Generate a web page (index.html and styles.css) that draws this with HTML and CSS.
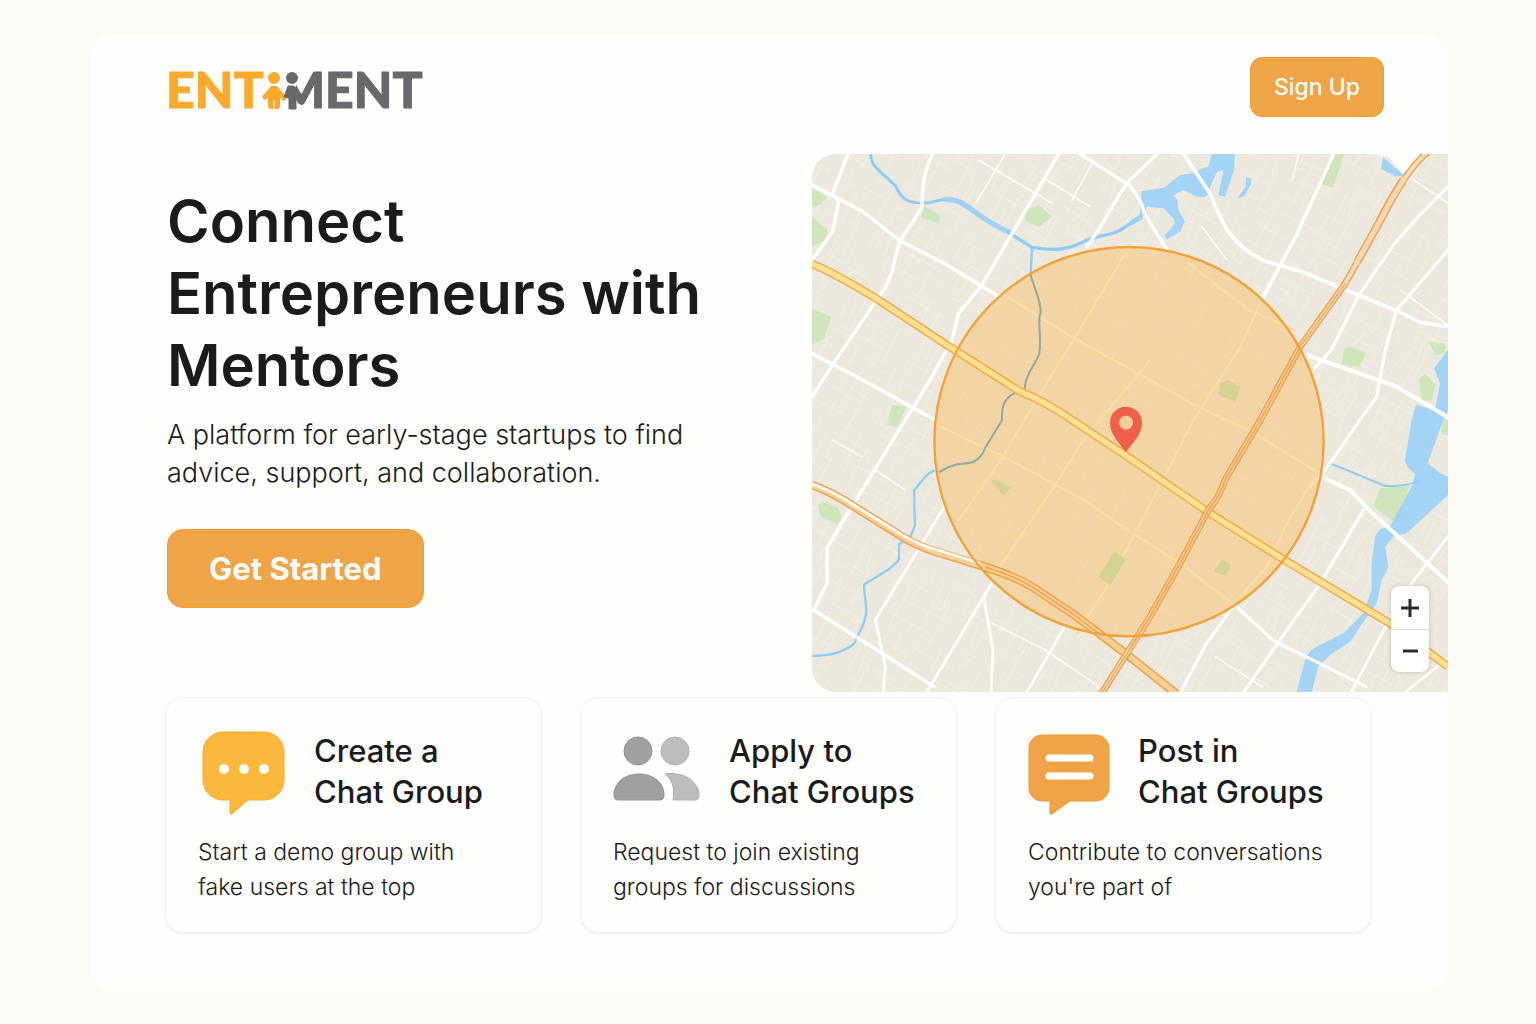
FILE: index.html
```html
<!DOCTYPE html>
<html lang="en">
<head>
<meta charset="utf-8">
<meta name="viewport" content="width=device-width, initial-scale=1">
<title>Entiment</title>
<link rel="stylesheet" href="styles.css">
</head>
<body>
<div class="panel">
  <header class="header">
    <a class="logo" href="#" aria-label="Entiment home">
      <svg width="270" height="64" viewBox="-4 -11 270 64">
        <defs>
          <clipPath id="m-side"><path d="M131 16l8-18h30v46h-40V16z"/></clipPath>
        </defs>
        <g class="logo-text">
          <text class="logo-warm" x="-1" y="40">ENT</text>
          <text class="logo-cool" x="158" y="40" text-anchor="end" clip-path="url(#m-side)">M</text>
          <text class="logo-cool" x="158" y="40">ENT</text>
        </g>
        <g fill="#fba92c">
          <circle cx="107" cy="10" r="6"/>
          <path d="M104 18h6l3 4v16q0 3-3 3h-6q-3 0-3-3V22z"/>
          <path d="M105 21l-7 8M109 21l8 9" fill="none" stroke="#fba92c" stroke-width="5" stroke-linecap="round"/>
          <path d="M107 32v9" stroke="#fefefc"/>
        </g>
        <g fill="#69696b" stroke-linejoin="round">
          <circle cx="125" cy="10" r="7" stroke="#fefefc" stroke-width="2"/>
          <path d="M121 18h6l12 13-4 6-6-9v13h-7V30l-5-1z" stroke="#69696b" stroke-width="1"/>
        </g>
      </svg>
    </a>
    <button class="btn btn-small" type="button">Sign Up</button>
  </header>

  <main>
    <section class="hero">
      <div class="intro">
        <h1>Connect Entrepreneurs with Mentors</h1>
        <p>A platform for early-stage startups to find advice, support, and collaboration.</p>
        <button class="btn btn-large" type="button">Get Started</button>
      </div>

      <div class="map">
        <svg class="map-art" viewBox="0 12 1908 1614" role="img" aria-label="Map of mentors nearby">
          <defs>
            <pattern id="lanes" width="260" height="230" patternUnits="userSpaceOnUse" patternTransform="rotate(28)">
              <path d="M10 0v90M48 20v150M95 60v170M140 0v60M180 40v120M225 90v140M0 30h70M30 85h120M120 140h110M60 195h150M190 25h70M70 110l10 60M160 160l-6 50M205 60l8 50" fill="none" stroke="#fff" stroke-opacity=".25" stroke-width="3"/>
            </pattern>
            <pattern id="lanes-fine" width="190" height="170" patternUnits="userSpaceOnUse" patternTransform="rotate(33)">
              <path d="M20 10v70M34 30v90M78 0v50M110 60v90M122 40v60M160 90v60M5 130h60M70 95h60M100 25h70M140 70h40" fill="none" stroke="#fff" stroke-opacity=".25" stroke-width="2"/>
            </pattern>
          </defs>
          <rect y="12" width="1908" height="1614" fill="#ece8dd"/>
          <rect y="12" width="1908" height="1614" fill="url(#lanes)"/>
          <rect y="12" width="1908" height="1614" fill="url(#lanes-fine)"/>

          <g fill="#cfe5ba">
            <path d="M0 115l45 25-20 25-25 5zM0 200l50 42-15 30-35 20zM0 475l58 25-22 66-36 18zM335 168l50 28-4 25-52-18zM645 180l35-15 40 35-40 32-42-22zM240 765l45 5-30 60-30-5zM18 1065l15-12 45 20 12 30-15 20-52-25zM1565 12h33l-36 101-35-10zM1595 600l15-12 52 22-20 42-52-10zM1850 575l50 5v30l-30 5zM1820 690l20-18 30 30-10 50-30-2zM1704 1015l90-10-40 118-70-55zM1890 810h18v45l-20-3z"/>
          </g>

          <g fill="#a3d4f5">
            <path d="M989 124l25-4 45-8 45-37 50-7 10-10 25-8 10-38h70l-3 48-27 80-20-5 15-75-18 5-17 35-10 30-10 12-25-2-40-20-30 15 12 15 3 30 20 35-15 30-40 23-7-10 32-38-5-15-30-30-50-5-15 40-35 15v-12l30-20z"/>
            <path d="M1303 82l14 4v16l-20 36-22 8 25-35z"/>
            <path d="M1908 600L1866 655 1884 700 1869 780 1812 765 1799 810 1779 930Q1780 950 1809 970L1804 1000 1734 1130Q1700 1130 1689 1160L1679 1240V1320L1654 1390 1594 1450 1514 1490Q1490 1500 1479 1530L1454 1626H1499L1519 1550 1554 1515 1614 1475 1644 1430 1694 1360 1709 1290 1729 1250 1719 1190 1744 1160 1784 1150 1908 1035V980L1884 970 1847 940 1869 880 1894 810 1908 780z"/>
          </g>
          <g fill="none" stroke="#8dcdf6" stroke-linecap="round" stroke-linejoin="round">
            <path d="M176 12c0 40 30 50 74 95 20 45 40 52 90 52 30-2 50-15 75-11" stroke-width="9"/>
            <path d="M400 148c70 0 70 45 195 100" stroke="#a0d2f5" stroke-width="16"/>
            <path d="M590 248l70 44c60 10 110 10 160-20 50-20 90-16 120-42l35-20" stroke-width="10"/>
            <path d="M660 295l-4 80M366 962c-25 10-35 30-60 60l3 105-18 40-30 16v45c-20 30-60 45-104 75-4 50 20 70-8 130l-24 50c-30 20-50 32-125 35" stroke-width="7"/>
            <path d="M1555 940l165 68c40 2 70-4 100-14" stroke-width="6"/>
          </g>

          <g fill="none" stroke="#fff" stroke-linecap="round" stroke-linejoin="round">
            <g stroke-width="10">
              <path d="M0 105l150 78 115 90 130 66 165 100"/>
              <path d="M108 12L62 130l18 25-18 90-62 85M362 12c-30 60-30 100-32 160l-65 100c-20 50-15 90-45 140L68 635 0 740"/>
              <path d="M740 12L600 250l-90 155-70 85-20 80-60 110-80 130L110 1085l-65 110 0 105-40 80 190 120 170 110"/>
              <path d="M805 12l149 95c20 30 38 50 42 80l30 50 38 60M1035 12L954 90c-50 60-80 140-130 200"/>
              <path d="M1115 12l80 120c35 90 60 150 160 200l120 35 290 120 60 30 80 12" stroke-width="11"/>
              <path d="M0 610l170 90 200 110M1565 12l-110 240-100 188"/>
              <path d="M1908 110l-90 90-70 80-110 160-80 160-50 55M1908 300l-154 180-34 120-26 140-50 70-90 130-60 70" stroke-width="9"/>
              <path d="M1484 615l270 95 154 92M1535 984l80 36 66 70 100 90 127 116" stroke-width="12"/>
              <path d="M1655 1080l-130 220-100 140-130 186M1262 1360l120 110 280 140M1262 1372l-80 110-75 142" stroke-width="9"/>
              <path d="M400 1065L190 1410l30 140-6 76M515 1340l28 160-6 126M545 1290L345 1626M755 1435L645 1626M1908 1160l-140 180-150 286M1900 1530l-120 96" stroke-width="8"/>
            </g>
            <g stroke-width="5" stroke-opacity=".8">
              <path d="M580 12l-90 150M500 30l220 130M705 90l130 80M840 40l-60 110M1460 12l-20 80M190 960l90 60M60 870l90 50M540 1420l160 80 160 110M1170 230l75 100M1210 1520l140 90M1790 80l118 80M1765 420l143 105"/>
            </g>
          </g>
          <path d="M1690 12l40 10 45 52 18 6 48-68z" fill="#fefefc"/>
          <path d="M1713 22l62 54-20 4-48-22z" fill="#a3d4f5"/>

          <circle cx="951" cy="875" r="585" fill="#fbb857" fill-opacity=".42"/>
          <g fill="none" stroke="#fbdca3" stroke-width="7" stroke-linecap="round" stroke-linejoin="round">
            <path d="M580 435l105 68 100 60 170 95 190 105 170 80 205 125M940 310L790 560 680 740 560 940 440 1110M1345 460l-60 130-140 220-160 310-100 190-90 140"/>
            <path d="M385 830l190 90 240 130 139 95 150 95 150 115M1130 340l180 140 140 60M1515 970l-90 150-60 130-90 100M1010 635l-200 240-80 130-170 250"/>
          </g>
          <path d="M1225 700l22-10 38 22-14 42-52-20zM535 990l25 2 36 22-22 20zM905 1205l38 22-48 78-35-25zM1232 1228l26 20-20 30-34-14z" fill="#d5d394"/>
          <path d="M656 375c10 40 30 70 30 115-12 20 4 60-4 120-10 35-40 55-44 106-60 20-70 45-68 95l-50 82c-20 55-60 45-85 50-30 8-40 15-55 24" fill="none" stroke="#8daaa6" stroke-width="6"/>

          <g fill="none" stroke-linejoin="round">
            <path d="M0 342Q60 365 200 450L400 582 620 722Q700 755 780 810L954 925 1194 1090 1414 1228 1734 1420 1908 1550" stroke="#f3a83c" stroke-width="25"/>
            <path d="M0 342Q60 365 200 450L400 582 620 722Q700 755 780 810L954 925 1194 1090 1414 1228 1734 1420 1908 1550" stroke="#fbe093" stroke-width="17"/>
            <path d="M0 1005Q60 1025 150 1085L270 1160Q320 1190 370 1205L510 1248Q600 1275 660 1310L780 1390 940 1510 1094 1632" stroke="#f1a043" stroke-width="26"/>
            <path d="M0 1005Q60 1025 150 1085L270 1160Q320 1190 370 1205L510 1248Q600 1275 660 1310L780 1390 940 1510 1094 1632" stroke="#f9cf98" stroke-width="17"/>
            <path d="M0 1002Q60 1020 150 1080L270 1154Q320 1184 370 1198L505 1240" stroke="#fff" stroke-width="8"/>
            <path d="M520 1251Q600 1275 660 1310L780 1390 860 1450" stroke="#f1a043" stroke-width="4"/>
            <path d="M1850 4Q1780 60 1700 220L1600 400 1465 590 1345 810 1239 990Q1220 1045 1189 1080L1104 1240 1014 1400 868 1632" stroke="#ee9a49" stroke-width="20"/>
            <path d="M1850 4Q1780 60 1700 220L1600 400 1465 590 1345 810 1239 990Q1220 1045 1189 1080L1104 1240 1014 1400 868 1632" stroke="#fbddb8" stroke-width="12"/>
            <path d="M1465 590L1345 810 1239 990Q1220 1045 1189 1080L1104 1240 1014 1400 960 1490" stroke="#f6c98c" stroke-width="12"/>
            <path d="M1600 400L1465 590 1345 810 1239 990Q1220 1045 1189 1080L1104 1240 1014 1400 868 1632" stroke="#eea64f" stroke-width="4"/>
            <path d="M1770 96Q1735 150 1700 220L1640 328" stroke="#ee9a49" stroke-width="24" stroke-linecap="round"/>
            <path d="M1778 84Q1735 150 1700 220L1632 342" stroke="#fad9b0" stroke-width="16"/>
          </g>
          <circle cx="951" cy="875" r="584" fill="none" stroke="#f3a233" stroke-width="7"/>
          <path d="M942 908c-10-20-48-50-48-90a48 48 0 0 1 96 0c0 40-38 70-48 90z" fill="#f05f49"/>
          <circle cx="942" cy="818" r="21" fill="#f5d09b"/>
        </svg>
        <div class="zoom">
          <button type="button" aria-label="Zoom in"><svg width="20" height="20" viewBox="0 0 20 20"><path d="M10 1v18M1 10h18"/></svg></button>
          <button type="button" aria-label="Zoom out"><svg width="20" height="20" viewBox="0 0 20 20"><path d="M3 10h15"/></svg></button>
        </div>
      </div>
    </section>

    <section class="features">
      <article class="card">
        <div class="card-head">
          <svg width="88" height="86" viewBox="-2 -1 88 86">
            <path d="M22 1h42a20 20 0 0 1 20 20v28a20 20 0 0 1-20 20H48L32 83q-2 1-2-1V69h-8A20 20 0 0 1 3 49V21A20 20 0 0 1 22 1z" fill="#fab83d" stroke="#f9ae22"/>
            <g fill="#fff"><circle cx="24" cy="38" r="5"/><circle cx="44" cy="38" r="5"/><circle cx="64" cy="38" r="5"/></g>
          </svg>
          <h2>Create a<br>Chat Group</h2>
        </div>
        <p>Start a demo group with<br>fake users at the top</p>
      </article>

      <article class="card">
        <div class="card-head">
          <svg width="88" height="86" viewBox="0 -1 88 86">
            <g fill="#a0a0a0" stroke="#929292"><circle cx="25" cy="20" r="14"/><path d="M5 69c-3 0-4-2-4-5 0-12 10-21 25-21s25 9 25 21c0 3-1 5-4 5z"/></g>
            <g fill="#bdbdbd" stroke="#b0b0b0"><circle cx="62" cy="20" r="14"/><path d="M52 43c19-3 34 8 34 21 0 3-1 5-4 5H60c2-11 0-20-8-26z"/></g>
          </svg>
          <h2>Apply to<br>Chat Groups</h2>
        </div>
        <p>Request to join existing<br>groups for discussions</p>
      </article>

      <article class="card">
        <div class="card-head">
          <svg width="82" height="86" viewBox="0 -1 82 86">
            <path d="M14 4h54a13 13 0 0 1 13 13v40a13 13 0 0 1-13 13H42L24 83q-2 1-2-1V70h-8A13 13 0 0 1 1 57V17A13 13 0 0 1 14 4z" fill="#efa445" stroke="#ee9a31"/>
            <path d="M21 27h41M21 45h41" stroke="#fff" stroke-width="7" stroke-linecap="round"/>
          </svg>
          <h2>Post in<br>Chat Groups</h2>
        </div>
        <p>Contribute to conversations<br>you're part of</p>
      </article>
    </section>
  </main>
</div>
</body>
</html>
```
FILE: styles.css
```css
* { box-sizing: border-box; }

body {
  margin: 0;
  padding: 35px 88px 34px 91px;
  background: #fdfbf5;
  color: #1b1b1b;
  font-family: Inter, "Liberation Sans", sans-serif;
}

h1, h2, p { margin: 0; }
svg { display: block; }

.panel {
  padding-bottom: 57px;
  border-radius: 20px;
  background: #fefefc;
}

.header {
  display: flex;
  align-items: flex-start;
  justify-content: space-between;
  padding: 22px 64px 33px 72px;
}

.logo-text {
  font-family: Lato, "Liberation Sans", sans-serif;
  font-size: 50px;
  font-weight: 900;
  stroke-width: 1px;
  stroke-linejoin: round;
}
.logo-warm { fill: #fba92c; stroke: #fba92c; }
.logo-cool { fill: #69696b; stroke: #69696b; }

.btn {
  border: 1px solid #ed9c36;
  background: #efa445;
  color: #fff;
  font-family: inherit;
  cursor: pointer;
}
.btn-small {
  height: 60px;
  padding: 0 23px;
  border-radius: 12px;
  font-size: 23px;
  font-weight: 500;
}
.btn-large {
  height: 79px;
  margin-top: 37px;
  padding: 0 41px;
  border-radius: 16px;
  font-size: 31px;
  font-weight: 700;
}

.hero {
  display: grid;
  grid-template-columns: 721fr 636fr;
}
.intro { padding: 31px 72px 0 76px; }
.intro h1 {
  font-size: 58px;
  font-weight: 600;
  line-height: 72px;
}
.intro p {
  margin-top: 15px;
  font-size: 27px;
  font-weight: 350;
  line-height: 38px;
}

.map {
  position: relative;
  overflow: hidden;
  border-radius: 24px 0 0 24px;
}
.map-art { width: 100%; height: auto; }

.zoom {
  position: absolute;
  right: 19px;
  bottom: 20px;
  width: 38px;
  border-radius: 8px;
  background: #fff;
  box-shadow: 0 0 4px rgba(90, 80, 50, .3);
}
.zoom button {
  display: grid;
  place-items: center;
  width: 100%;
  height: 43px;
  padding: 0;
  border: 0;
  background: none;
}
.zoom button + button { border-top: 1px solid #ddd; }
.zoom path { fill: none; stroke: #2b2b2b; stroke-width: 3; }

.features {
  display: grid;
  grid-template-columns: repeat(3, 1fr);
  gap: 38px;
  margin-top: 5px;
  padding: 0 76px 0 74px;
}
.card {
  padding: 32px 30px 27px 32px;
  border: 1px solid #f2f1ee;
  border-radius: 18px;
  background: #fefefd;
  box-shadow: 0 1px 2px rgba(0, 0, 0, .06);
}
.card-head {
  display: flex;
  gap: 28px;
}
.card h2 {
  font-size: 31px;
  font-weight: 500;
  line-height: 41px;
  white-space: nowrap;
}
.card p {
  margin-top: 19px;
  font-size: 23px;
  font-weight: 350;
  line-height: 35px;
  white-space: nowrap;
}
```
